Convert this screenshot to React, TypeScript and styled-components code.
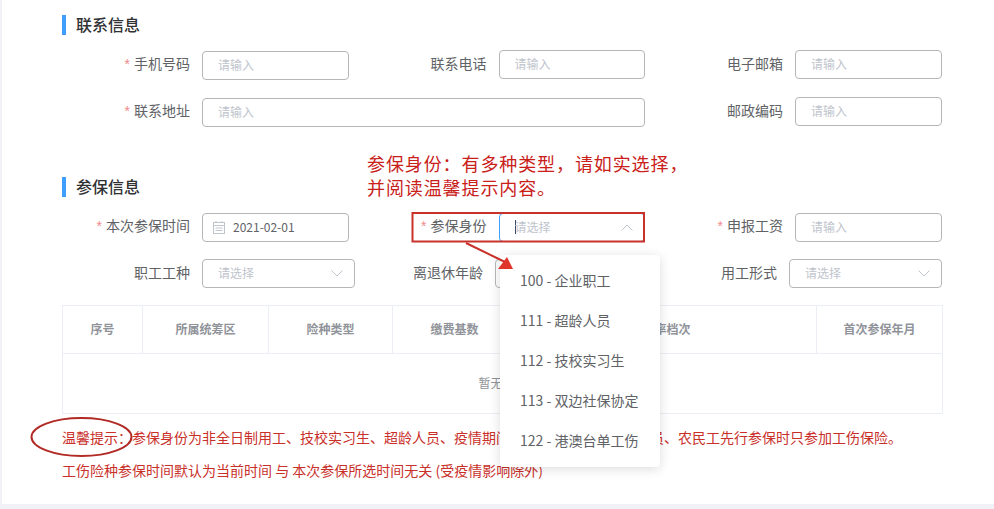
import React from "react";
import styled, { createGlobalStyle } from "styled-components";

const Global = createGlobalStyle`
  html, body { margin: 0; padding: 0; background: #f0f2f7; }
  body { font-family: "Noto Sans CJK SC", "Liberation Sans", sans-serif; overflow: hidden; }
  * { box-sizing: border-box; }
`;

const Page = styled.div`
  width: 994px;
  height: 509px;
  padding-left: 2px;
  overflow: hidden;
`;

const Card = styled.main`
  position: relative;
  height: 504px;
  background: #fff;
  padding: 15px 52px 0 60px;
`;

const SectionTitle = styled.h2<{ $top?: number }>`
  display: flex;
  align-items: flex-start;
  height: 20px;
  margin: ${(p) => p.$top ?? 0}px 0 15px;
  padding-left: 10px;
  border-left: 4px solid #409eff;
  font-size: 16px;
  font-weight: 500;
  color: #303133;
  line-height: 18px;
`;

const FormGrid = styled.div<{ $columns: string; $top?: number }>`
  display: grid;
  grid-template-columns: ${(p) => p.$columns};
  row-gap: 18px;
  margin: ${(p) => p.$top ?? 0}px 0 0 -10px;
`;

const Field = styled.div<{ $labelWidth?: number; $span?: number }>`
  display: grid;
  grid-template-columns: ${(p) => p.$labelWidth ?? 138}px 1fr;
  column-gap: 12px;
  align-items: center;
  height: 29px;
  grid-column: span ${(p) => p.$span ?? 1};
`;

const Label = styled.label`
  font-size: 14px;
  line-height: 27px;
  padding-bottom: 2px;
  color: #606266;
  text-align: right;
  white-space: nowrap;
`;

const Star = styled.span`
  color: #f08a8a;
  margin-right: 4px;
  font-family: "Liberation Sans", sans-serif;
`;

const TextInput = styled.input`
  display: block;
  width: 100%;
  height: 29px;
  padding: 0 15px 2px;
  border: 1px solid #b4b6ba;
  border-radius: 4px;
  background: #fff;
  font: 12px "Noto Sans CJK SC", sans-serif;
  color: #606266;
  outline: none;
  &::placeholder { color: #c0c4cc; opacity: 1; }
`;

const ControlBox = styled.div<{ $focused?: boolean }>`
  display: flex;
  align-items: center;
  height: 29px;
  padding: 0 11px 0 15px;
  border: 1px solid ${(p) => (p.$focused ? "#409eff" : "#b4b6ba")};
  border-radius: 4px;
  background: #fff;
  font-size: 12px;
  color: #c0c4cc;
`;

const DateBox = styled(ControlBox)`
  padding-left: 10px;
  gap: 8px;
  color: #606266;
`;

const BoxText = styled.span`
  flex: 1;
  padding-bottom: 2px;
`;

const Caret = styled.i`
  width: 1px;
  height: 14px;
  margin-right: -1px;
  background: #3a4a66;
`;

const DataTable = styled.table`
  width: 880px;
  margin-top: 17px;
  border-collapse: collapse;
  table-layout: fixed;
  font-size: 12px;
  th, td { border: 1px solid #ebeef5; text-align: center; padding: 0 0 2px; }
  th { height: 48px; font-weight: 700; color: #909399; }
  td { height: 60px; color: #909399; }
`;

const Tips = styled.div`
  margin-top: 7px;
  font-size: 14px;
  line-height: 33px;
  color: #c9302a;
  white-space: nowrap;
`;

const TipLine = styled.p`
  margin: 0;
`;

const Dropdown = styled.ul`
  position: absolute;
  left: 498px;
  top: 255px;
  width: 160px;
  height: 212px;
  margin: 0;
  padding: 6px 0;
  list-style: none;
  background: #fff;
  border-radius: 4px;
  box-shadow: 0 2px 12px rgba(0, 0, 0, 0.14);
`;

const Option = styled.li`
  height: 40px;
  padding: 0 0 2px 20px;
  font-size: 14px;
  line-height: 38px;
  color: #606266;
  white-space: nowrap;
`;

const Callout = styled.div`
  position: absolute;
  left: 365px;
  top: 151px;
  font-size: 18px;
  line-height: 24px;
  letter-spacing: 0.9px;
  color: #c9201a;
  white-space: nowrap;
`;

const Markup = styled.svg`
  position: absolute;
  left: -2px;
  top: 0;
  width: 994px;
  height: 509px;
  pointer-events: none;
`;

const Chevron = ({ up }: { up?: boolean }) => (
  <svg width="12" height="7" viewBox="0 0 12 7" fill="none" stroke="#c0c4cc" strokeWidth="1">
    <path d={up ? "M0.5 6.5 6 1l5.5 5.5" : "M0.5 0.5 6 6l5.5-5.5"} />
  </svg>
);

const CalendarIcon = () => (
  <svg width="12" height="13" viewBox="0 0 12 13" fill="none" stroke="#c0c4cc" strokeWidth="1">
    <rect x="0.5" y="1.5" width="11" height="11" />
    <path d="M0.5 4.5h11M3 0v2M9 0v2M2.5 7h7M2.5 9.5h7" />
  </svg>
);

const Req = () => <Star>*</Star>;

const Select = ({ up, focused }: { up?: boolean; focused?: boolean }) => (
  <ControlBox $focused={focused}>
    {focused && <Caret />}
    <BoxText>请选择</BoxText>
    <Chevron up={up} />
  </ControlBox>
);

const options = ["100 - 企业职工", "111 - 超龄人员", "112 - 技校实习生", "113 - 双边社保协定", "122 - 港澳台单工伤"];

export default function App() {
  return (
    <Page>
      <Global />
      <Card>
        <SectionTitle>联系信息</SectionTitle>
        <FormGrid $columns="296.5px 296.5px 296.5px">
          <Field>
            <Label><Req />手机号码</Label>
            <TextInput placeholder="请输入" />
          </Field>
          <Field>
            <Label>联系电话</Label>
            <TextInput placeholder="请输入" />
          </Field>
          <Field>
            <Label>电子邮箱</Label>
            <TextInput placeholder="请输入" />
          </Field>
          <Field $span={2}>
            <Label><Req />联系地址</Label>
            <TextInput placeholder="请输入" />
          </Field>
          <Field>
            <Label>邮政编码</Label>
            <TextInput placeholder="请输入" />
          </Field>
        </FormGrid>

        <SectionTitle $top={51}>参保信息</SectionTitle>
        <FormGrid $columns="296.5px 296.5px 296.5px">
          <Field>
            <Label><Req />本次参保时间</Label>
            <DateBox>
              <CalendarIcon />
              <BoxText>2021-02-01</BoxText>
            </DateBox>
          </Field>
          <Field>
            <Label><Req />参保身份</Label>
            <Select up focused />
          </Field>
          <Field>
            <Label><Req />申报工资</Label>
            <TextInput placeholder="请输入" />
          </Field>
        </FormGrid>
        <FormGrid $columns="303px 294px 293px" $top={18}>
          <Field>
            <Label>职工工种</Label>
            <Select />
          </Field>
          <Field $labelWidth={128}>
            <Label>离退休年龄</Label>
            <Select />
          </Field>
          <Field $labelWidth={128}>
            <Label>用工形式</Label>
            <Select />
          </Field>
        </FormGrid>

        <DataTable>
          <colgroup>
            <col width="80" />
            <col width="126" />
            <col width="124" />
            <col width="124" />
            <col width="300" />
            <col width="126" />
          </colgroup>
          <thead>
            <tr>
              <th>序号</th>
              <th>所属统筹区</th>
              <th>险种类型</th>
              <th>缴费基数</th>
              <th>费率档次</th>
              <th>首次参保年月</th>
            </tr>
          </thead>
          <tbody>
            <tr>
              <td colSpan={6}>暂无数据</td>
            </tr>
          </tbody>
        </DataTable>

        <Tips>
          <TipLine>温馨提示：参保身份为非全日制用工、技校实习生、超龄人员、疫情期间复工人员、退休返聘人员、农民工先行参保时只参加工伤保险。</TipLine>
          <TipLine>工伤险种参保时间默认为当前时间 与 本次参保所选时间无关 (受疫情影响除外)</TipLine>
        </Tips>

        <Dropdown>
          {options.map((o) => (
            <Option key={o}>{o}</Option>
          ))}
        </Dropdown>

        <Callout>
          参保身份：有多种类型，请如实选择，
          <br />
          并阅读温馨提示内容。
        </Callout>

        <Markup viewBox="0 0 994 509" fill="none">
          <rect x="412.5" y="213" width="231.5" height="28.5" stroke="#c8322b" strokeWidth="2" />
          <path d="M466 243 505 262" stroke="#c8322b" strokeWidth="2" />
          <path d="M498 269 507 257 513 269Z" fill="#e0352b" />
          <ellipse cx="81.5" cy="437" rx="50" ry="19" stroke="#b22a25" strokeWidth="2" />
        </Markup>
      </Card>
    </Page>
  );
}
